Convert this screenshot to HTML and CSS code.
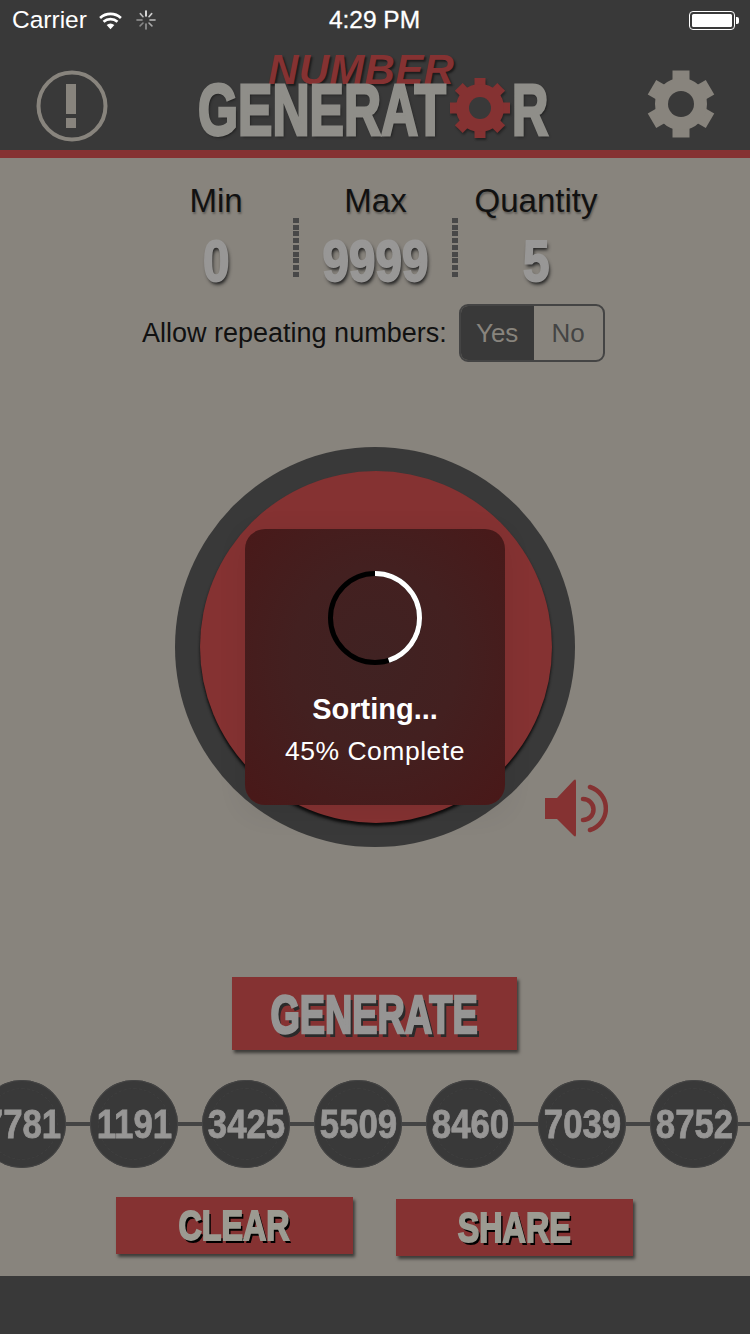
FILE: index.html
```html
<!DOCTYPE html>
<html lang="en">
<head>
<meta charset="utf-8">
<title>Number Generator</title>
<link rel="stylesheet" href="styles.css">
</head>
<body>
<div class="screen">
  <header class="top">
    <div class="status">
      <div class="status-left">
        <span>Carrier</span>
        <svg class="wifi" viewBox="0 0 24 18" width="25" height="19"><path d="M12 17.500 8.300 13.400a5.600 5.600 0 0 1 7.400 0z" fill="#fff"/><path d="M5.300 10.200a10 10 0 0 1 13.400 0M2 6.500a15 15 0 0 1 20 0" fill="none" stroke="#fff" stroke-width="2.600"/></svg>
        <svg class="busy" viewBox="0 0 20 20" width="20" height="20"><g stroke-width="1.600" stroke-linecap="round"><path d="M10 1v5" stroke="#fff"/><path d="M15.700 3.600 13 6.700" stroke="#ccc"/><path d="M19 10h-5" stroke="#bbb"/><path d="M15.900 15.900 13 13" stroke="#aaa"/><path d="M10 19v-5" stroke="#999"/><path d="M4.100 15.900 7 13" stroke="#888"/><path d="M1 10h5" stroke="#999"/><path d="M4.300 3.600 7 6.700" stroke="#bbb"/></g></svg>
      </div>
      <span class="time">4:29 PM</span>
      <div class="status-right">
        <div class="battery"><div class="battery-fill"></div></div>
        <div class="battery-nub"></div>
      </div>
    </div>
    <nav class="nav">
      <svg class="alert" viewBox="0 0 72 72" width="72" height="72"><circle cx="36" cy="36" r="33.500" fill="none" stroke="#88847d" stroke-width="4"/><rect x="30" y="14" width="10" height="30" fill="#88847d"/><rect x="30" y="48" width="10" height="10" fill="#88847d"/></svg>
      <div class="logo">
        <span class="logo-top">NUMBER</span>
        <span class="logo-main">GENERAT</span>
        <svg class="logo-gear" viewBox="-31 -31 62 62" width="62" height="62">
          <g fill="#853232">
            <rect x="-5.500" y="-30" width="11" height="60"/>
            <rect x="-5.500" y="-30" width="11" height="60" transform="rotate(45)"/>
            <rect x="-5.500" y="-30" width="11" height="60" transform="rotate(90)"/>
            <rect x="-5.500" y="-30" width="11" height="60" transform="rotate(135)"/>
          </g>
          <circle r="17.500" fill="none" stroke="#853232" stroke-width="13"/>
          <circle r="11" fill="#393939"/>
        </svg>
        <span class="logo-main logo-r">R</span>
      </div>
      <svg class="settings" viewBox="-34 -34 68 68" width="68" height="68">
        <g fill="#88847d">
          <rect x="-8.500" y="-33.500" width="17" height="67"/>
          <rect x="-8.500" y="-33.500" width="17" height="67" transform="rotate(60)"/>
          <rect x="-8.500" y="-33.500" width="17" height="67" transform="rotate(120)"/>
        </g>
        <circle r="19" fill="none" stroke="#88847d" stroke-width="14"/>
        <circle r="13" fill="#393939"/>
      </svg>
    </nav>
  </header>

  <main class="main">
    <section class="stats">
      <div class="stat"><span class="stat-label">Min</span><span class="stat-value">0</span></div>
      <div class="divider"></div>
      <div class="stat"><span class="stat-label">Max</span><span class="stat-value">9999</span></div>
      <div class="divider"></div>
      <div class="stat"><span class="stat-label">Quantity</span><span class="stat-value">5</span></div>
    </section>

    <section class="repeat">
      <span class="repeat-label">Allow repeating numbers:</span>
      <div class="segment">
        <span class="seg seg-on">Yes</span>
        <span class="seg">No</span>
      </div>
    </section>

    <section class="stage">
      <div class="disc"></div>
      <svg class="speaker" viewBox="0 0 63 58" width="63" height="58">
        <path d="M0 19h12L28.500 1.500q2.500-2.500 2.500 1v53q0 3.500-2.500 1L12 40H0z" fill="#853232"/>
        <path d="M38 20A10.500 10.500 0 0 1 38 41M45 8A22.500 22.500 0 0 1 45 51" fill="none" stroke="#853232" stroke-width="4.500" stroke-linecap="round"/>
      </svg>
      <div class="hud">
        <svg class="ring" viewBox="0 0 94 94" width="94" height="94">
          <circle cx="47" cy="47" r="44.500" fill="none" stroke="#000" stroke-width="5"/>
          <circle class="ring-progress" cx="47" cy="47" r="44.500" fill="none" stroke="#fff" stroke-width="5" pathLength="100"/>
        </svg>
        <div class="hud-title">Sorting...</div>
        <div class="hud-detail">45% Complete</div>
      </div>
    </section>

    <button class="btn btn-generate"><span class="btn-text">GENERATE</span></button>

    <section class="chips">
      <div class="chip"><span class="chip-num">7781</span></div><div class="link"></div>
      <div class="chip"><span class="chip-num">1191</span></div><div class="link"></div>
      <div class="chip"><span class="chip-num">3425</span></div><div class="link"></div>
      <div class="chip"><span class="chip-num">5509</span></div><div class="link"></div>
      <div class="chip"><span class="chip-num">8460</span></div><div class="link"></div>
      <div class="chip"><span class="chip-num">7039</span></div><div class="link"></div>
      <div class="chip"><span class="chip-num">8752</span></div><div class="link"></div>
    </section>

    <section class="actions">
      <button class="btn btn-small"><span class="btn-text-small">CLEAR</span></button>
      <button class="btn btn-small btn-share"><span class="btn-text-small">SHARE</span></button>
    </section>
  </main>

  <footer class="bottom"></footer>
</div>
</body>
</html>
```

FILE: styles.css
```css
* { box-sizing: border-box; }
html, body { margin: 0; padding: 0; }
body { font-family: "Liberation Sans", Arial, sans-serif; background: #88847d; }

.screen {
  width: 750px;
  height: 1334px;
  display: flex;
  flex-direction: column;
  overflow: hidden;
  background: #88847d;
}

/* Header */
.top {
  height: 158px;
  background: #393939;
  border-bottom: 8px solid #853232;
  flex: none;
}
.status {
  height: 40px;
  padding: 0 11px 0 12px;
  display: grid;
  grid-template-columns: 1fr auto 1fr;
  align-items: center;
  color: #fff;
  font-size: 24.500px;
}
.status-left { display: flex; align-items: center; }
.wifi { margin-left: 11px; }
.busy { margin-left: 13px; }
.time { font-weight: 500; -webkit-text-stroke: 0.300px #fff; margin-left: -2px; }
.status-right { display: flex; align-items: center; justify-content: flex-end; }
.battery {
  width: 46px;
  height: 19px;
  border: 1px solid #fff;
  border-radius: 4px;
  padding: 2px;
}
.battery-fill { height: 100%; background: #fff; border-radius: 1.500px; }
.battery-nub { width: 3px; height: 7px; background: #fff; margin-left: 1px; border-radius: 0 2px 2px 0; }

.nav {
  height: 102px;
  display: flex;
  align-items: flex-start;
  padding: 0 35px 0 36px;
  justify-content: space-between;
  position: relative;
}
.alert { margin-top: 30px; }
.settings { margin-top: 30px; }
.logo {
  position: relative;
  display: flex;
  align-items: flex-start;
  width: 352px;
  height: 102px;
  padding-top: 40px;
  margin-left: -7px;
}
.logo-top {
  position: absolute;
  left: 70px;
  top: 6px;
  font: italic bold 42px/48px "Liberation Sans", Arial, sans-serif;
  letter-spacing: 0.300px;
  color: #853232;
  text-shadow: 2px 2px 2px #1c1c1c;
}
.logo-main {
  flex: none;
  width: 249px;
  font: bold 72px/60px "Liberation Sans", Arial, sans-serif;
  color: #8f8e89;
  -webkit-text-stroke: 3px #8f8e89;
  text-shadow: 2px 2px 3px #1c1c1c;
  white-space: nowrap;
  transform: scaleX(0.715);
  transform-origin: left center;
}
.logo-gear {
  flex: none;
  margin: -3px 0 0 2px;
  filter: drop-shadow(1px 2px 1px #222);
}
.logo-r { width: 38px; margin-left: 1px; transform: scaleX(0.7); }

/* Main */
.main { flex: 1; display: flex; flex-direction: column; min-height: 0; padding-top: 23px; }
.stats {
  display: grid;
  grid-template-columns: 154px 6px 153px 6px 156px;
  padding-left: 139px;
  height: 112px;
}
.stat { display: flex; flex-direction: column; align-items: center; }
.stat-label {
  font-size: 33px;
  line-height: 40px;
  color: #111;
  text-shadow: 1px 2px 2px rgba(0, 0, 0, 0.3);
}
.stat-value {
  font: bold 58px/66px "Liberation Sans", Arial, sans-serif;
  color: #989796;
  margin-top: 7px;
  -webkit-text-stroke: 2px #989796;
  text-shadow: 2px 3px 4px #222;
  transform: scaleX(0.82);
}
.divider {
  width: 6px;
  height: 60px;
  margin-top: 37px;
  background: repeating-linear-gradient(#484848 0 5px, transparent 5px 6.750px);
}
.repeat {
  display: flex;
  align-items: center;
  padding-left: 142px;
  margin-top: 11px;
  height: 58px;
}
.repeat-label { font-size: 27px; color: #111; }
.segment {
  margin-left: 12px;
  width: 146px;
  height: 58px;
  display: grid;
  grid-template-columns: 73px 1fr;
  border: 2px solid #444;
  border-radius: 9px;
  overflow: hidden;
  color: #444;
  font-size: 26px;
}
.seg { display: flex; align-items: center; justify-content: center; }
.seg-on { background: #393939; color: #88847d; }

.stage {
  position: relative;
  width: 400px;
  height: 400px;
  margin: 85px 0 0 175px;
  background: #393939;
  border-radius: 50%;
  display: flex;
  align-items: center;
  justify-content: center;
  flex: none;
}
.disc {
  width: 352px;
  height: 352px;
  margin-left: 2px;
  border-radius: 50%;
  background: #853232;
  box-shadow: 0 3px 3px #0c0c0c;
}
.speaker { position: absolute; left: 370px; top: 332px; }
.hud {
  position: absolute;
  left: 70px;
  top: 82px;
  width: 260px;
  height: 276px;
  border-radius: 20px;
  background: radial-gradient(ellipse at 50% 47%, #402222 0%, #432020 45%, #491818 100%);
  box-shadow: 0 6px 30px rgba(0, 0, 0, 0.08);
  color: #fff;
  display: flex;
  flex-direction: column;
  align-items: center;
  padding-top: 42px;
}
.ring-progress { stroke-dasharray: 45 55; transform: rotate(-90deg); transform-origin: 47px 47px; }
.hud-title { font-size: 29px; font-weight: bold; line-height: 34px; margin-top: 27px; }
.hud-detail { font-size: 26.500px; line-height: 30px; margin-top: 10px; letter-spacing: 0.500px; }

.btn {
  display: flex;
  align-items: center;
  justify-content: center;
  border: 0;
  padding: 0;
  background: #853232;
  box-shadow: 2px 3px 3px rgba(0, 0, 0, 0.55);
  font-family: "Liberation Sans", Arial, sans-serif;
  font-weight: bold;
  flex: none;
}
.btn-generate { width: 285px; height: 73px; margin: 130px 0 0 232px; }
.btn-text {
  display: block;
  font-size: 54px;
  color: #969594;
  -webkit-text-stroke: 2.500px #969594;
  text-shadow: 4px 4px 0 #2a2a2a;
  transform: scaleX(0.7);
}

.chips {
  display: flex;
  align-items: center;
  margin: 30px 0 0 -22px;
  height: 88px;
  flex: none;
}
.chip {
  position: relative;
  flex: none;
  width: 88px;
  height: 88px;
  border-radius: 50%;
  background: #393939;
  box-shadow: inset 0 0 0 1px #444;
  display: flex;
  align-items: center;
  justify-content: center;
}
.chip::before {
  content: "";
  position: absolute;
  inset: 8px;
  border-radius: 50%;
  border: 1px dashed #3f3f3f;
}
.chip-num {
  color: #979695;
  font: bold 40px/1 "Liberation Sans", Arial, sans-serif;
  -webkit-text-stroke: 0.800px #979695;
  transform: scaleX(0.87);
}
.link { flex: none; width: 24px; height: 4px; background: #444; }

.actions {
  display: flex;
  align-items: flex-start;
  gap: 43px;
  margin: 29px 0 0 116px;
}
.btn-small { width: 237px; height: 57px; }
.btn-share { margin-top: 2px; }
.btn-text-small {
  display: block;
  font-size: 43px;
  color: #9c9b92;
  -webkit-text-stroke: 2px #9c9b92;
  text-shadow: 3px 3px 0 #000;
  transform: scaleX(0.75);
}

.bottom { height: 58px; background: #393939; flex: none; }
```
